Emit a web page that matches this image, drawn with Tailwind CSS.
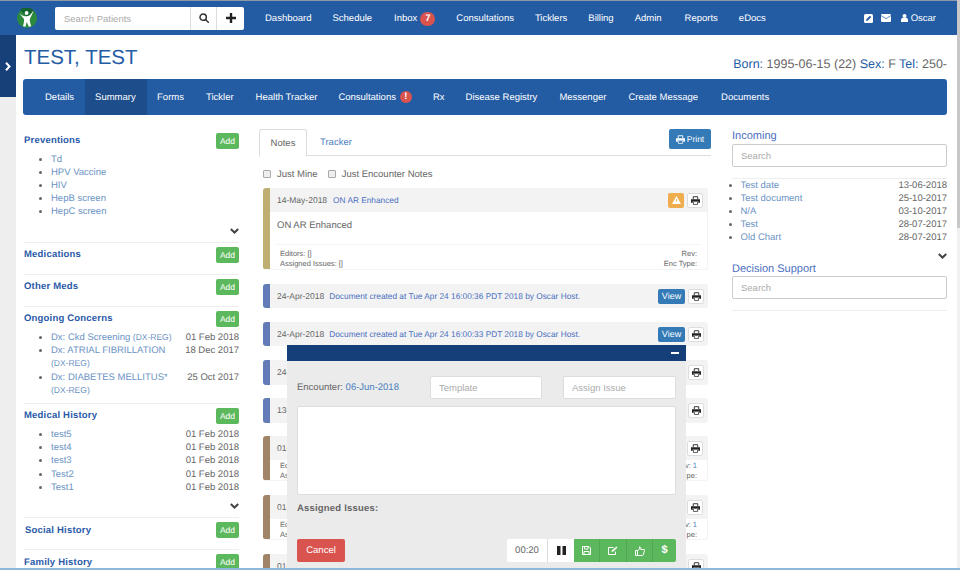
<!DOCTYPE html>
<html lang="en">
<head>
    <meta charset="UTF-8">
    <title>TEST, TEST - Summary</title>
    <script src="https://cdn.jsdelivr.net/npm/@tailwindcss/browser@4"></script>
</head>
<body class="font-['Liberation_Sans',sans-serif] [text-rendering:geometricPrecision] text-[9.5px] leading-[13px] text-[#666] bg-white">
<div class="relative w-[960px] h-[570px] overflow-hidden">

    <!-- Top nav -->
    <header class="h-[35px] w-[957px] bg-[#245ca4] border-t border-t-[#8d98a8] flex items-center text-white">
        <svg class="ml-[17px] w-[20px] h-[20px]" viewBox="0 0 20 20">
            <circle cx="10" cy="10" r="10" fill="#2c8a3e"/>
            <path d="M3 1.800A10 10 0 0 1 17 2.800L10 9z" fill="#14632f"/>
            <circle cx="9.600" cy="5" r="1.900" fill="#fff"/>
            <path d="M2.800 5.500C5 8 7 8.300 9.500 8.300C12 8.300 14 6.500 16.500 2.200C15.500 6.500 13.200 9.500 12.800 11.500C12.600 13.500 13.500 15.500 14.200 18.300L11.800 18.800L9.800 14L8.400 18.800L6 18.300C6.600 15.500 7.300 13.500 7 11.300C6.500 9.800 4 8 2.800 5.500Z" fill="#fff"/>
        </svg>
        <input class="ml-[18px] w-[135px] h-[23px] bg-white rounded-l-[2px] px-[9px] text-[9.5px] text-[#666] placeholder:text-[#aaa] outline-none" placeholder="Search Patients">
        <div class="flex h-[23px] bg-white rounded-r-[2px] border-l border-l-[#ddd]">
            <div class="w-[26px] flex items-center justify-center border-r border-r-[#ddd]">
                <svg class="w-[10px] h-[10px]" viewBox="0 0 12 12" fill="none" stroke="#333" stroke-width="1.800"><circle cx="5" cy="5" r="3.800"/><path d="M8 8l3.200 3.200" stroke-linecap="round"/></svg>
            </div>
            <div class="w-[27px] flex items-center justify-center">
                <svg class="w-[10px] h-[10px]" viewBox="0 0 10 10" fill="#222"><path d="M3.800 0h2.400v3.800H10v2.400H6.200V10H3.800V6.200H0V3.800h3.800z"/></svg>
            </div>
        </div>
        <nav class="ml-[21px] pt-[1px] flex gap-[21px] items-center">
            <span>Dashboard</span>
            <span>Schedule</span>
            <span class="ml-[1px] flex items-center gap-[3px]">Inbox <span class="w-[15px] h-[14px] rounded-full bg-[#d9534f] text-center leading-[14px] font-bold">7</span></span>
            <span>Consultations</span>
            <span>Ticklers</span>
            <span>Billing</span>
            <span>Admin</span>
            <span class="ml-[2px]">Reports</span>
            <span>eDocs</span>
        </nav>
        <div class="ml-auto mr-[21px] flex items-center">
            <svg class="w-[9px] h-[9px]" viewBox="0 0 9 9"><rect width="9" height="9" rx="1.500" fill="#fff"/><path d="M2 7l.5-2L6 1.700 7.300 3 3.900 6.500z" fill="#245ca4"/></svg>
            <svg class="ml-[8px] w-[10px] h-[8px]" viewBox="0 0 10 8"><rect width="10" height="8" rx="1" fill="#fff"/><path d="M0 1.500l5 3.200 5-3.200" fill="none" stroke="#245ca4" stroke-width=".7"/></svg>
            <svg class="ml-[10px] w-[7px] h-[8px]" viewBox="0 0 7 8" fill="#fff"><circle cx="3.500" cy="2" r="2"/><path d="M0 8V6c0-1.500 1-2 2-2.300h3C6 4 7 4.500 7 6v2z"/></svg>
            <span class="ml-[3px]">Oscar</span>
        </div>
    </header>

    <div class="flex h-[535px]">
        <!-- Collapsed side strip -->
        <aside class="w-[16px] h-full bg-[#eeeeee]">
            <div class="h-[62px] bg-[#173f78] flex items-center justify-center">
                <svg class="w-[6px] h-[9px]" viewBox="0 0 6 9" fill="none" stroke="#fff" stroke-width="2"><path d="M1 .8l3.500 3.700L1 8.200"/></svg>
            </div>
        </aside>

        <div class="w-[931px] pl-[7px]">
            <!-- Patient heading -->
            <div class="h-[44px] w-[924px] flex items-end justify-between pb-[9px]">
                <h1 class="ml-[1px] text-[20.500px] leading-[24px] text-[#245ca4]">TEST, TEST</h1>
                <p class="text-[12.500px] leading-[14px] -mb-[1px]"><span class="text-[#245ca4]">Born:</span> 1995-06-15 (22) <span class="text-[#245ca4]">Sex:</span> F <span class="text-[#245ca4]">Tel:</span> 250-</p>
            </div>

            <!-- Chart tabs -->
            <div class="h-[36px] w-[924px] bg-[#245ca4] rounded-[3px] flex items-center pl-[11px] text-white">
                <span class="px-[11px] h-full flex items-center">Details</span>
                <span class="pl-[10px] pr-[10px] w-[62px] h-full flex items-center bg-[#1e4d8c]">Summary</span>
                <span class="pl-[10px] pr-[11px] h-full flex items-center">Forms</span>
                <span class="pl-[11px] pr-[12px] h-full flex items-center">Tickler</span>
                <span class="pl-[10px] pr-[11px] h-full flex items-center">Health Tracker</span>
                <span class="px-[10px] h-full flex items-center gap-[4px]">Consultations <span class="w-[12px] h-[12px] rounded-full bg-[#d9534f] text-center leading-[12px] font-bold">!</span></span>
                <span class="px-[11px] h-full flex items-center">Rx</span>
                <span class="pl-[10px] pr-[11px] h-full flex items-center">Disease Registry</span>
                <span class="pl-[11px] pr-[12px] h-full flex items-center">Messenger</span>
                <span class="pl-[10px] pr-[12px] h-full flex items-center">Create Message</span>
                <span class="px-[11px] h-full flex items-center">Documents</span>
            </div>

            <div class="flex mt-[14px]">
                <!-- Left column -->
                <section class="w-[215px] ml-[1px] mt-[4px] shrink-0">
                    <div class="h-[110px] border-b border-b-[#eee]">
                        <div class="flex justify-between items-center h-[16px]">
                            <h3 class="font-bold text-[#2a5aa8] tracking-[0.2px] -mt-[1px]">Preventions</h3>
                            <span class="w-[23px] h-[16px] bg-[#5cb85c] rounded-[2px] text-white text-center leading-[16px] text-[8.5px]">Add</span>
                        </div>
                        <ul class="mt-[3.5px] pl-[27px] leading-[13.2px] list-disc text-[#6b93c4] marker:text-[#666]">
                            <li>Td</li><li>HPV Vaccine</li><li>HIV</li><li>HepB screen</li><li>HepC screen</li>
                        </ul>
                        <div class="flex justify-end mt-[9px]">
                            <svg class="w-[9px] h-[6px]" viewBox="0 0 9 6" fill="none" stroke="#444" stroke-width="2"><path d="M.8 1l3.700 3.500L8.200 1"/></svg>
                        </div>
                    </div>
                    <div class="h-[32px] border-b border-b-[#eee] pt-[4px] flex justify-between items-start">
                        <h3 class="font-bold text-[#2a5aa8] tracking-[0.2px] leading-[16px]">Medications</h3>
                        <span class="w-[23px] h-[16px] bg-[#5cb85c] rounded-[2px] text-white text-center leading-[16px] text-[8.5px]">Add</span>
                    </div>
                    <div class="h-[32px] border-b border-b-[#eee] pt-[4px] flex justify-between items-start">
                        <h3 class="font-bold text-[#2a5aa8] tracking-[0.2px] leading-[16px]">Other Meds</h3>
                        <span class="w-[23px] h-[16px] bg-[#5cb85c] rounded-[2px] text-white text-center leading-[16px] text-[8.5px]">Add</span>
                    </div>
                    <div class="h-[97px] border-b border-b-[#eee] pt-[4px]">
                        <div class="flex justify-between items-center h-[16px]">
                            <h3 class="font-bold text-[#2a5aa8] tracking-[0.2px] -mt-[1px]">Ongoing Concerns</h3>
                            <span class="w-[23px] h-[16px] bg-[#5cb85c] rounded-[2px] text-white text-center leading-[16px] text-[8.5px]">Add</span>
                        </div>
                        <ul class="mt-[4px] pl-[27px] leading-[13.2px] list-disc marker:text-[#666]">
                            <li><div class="flex justify-between"><span class="text-[#6b93c4]">Dx: Ckd Screening <span class="text-[8.5px]">(DX-REG)</span></span><span>01 Feb 2018</span></div></li>
                            <li><div class="flex justify-between"><span class="text-[#6b93c4]">Dx: ATRIAL FIBRILLATION</span><span>18 Dec 2017</span></div><div class="text-[8.5px] text-[#6b93c4]">(DX-REG)</div></li>
                            <li><div class="flex justify-between"><span class="text-[#6b93c4]">Dx: DIABETES MELLITUS*</span><span>25 Oct 2017</span></div><div class="text-[8.5px] text-[#6b93c4]">(DX-REG)</div></li>
                        </ul>
                    </div>
                    <div class="h-[114px] border-b border-b-[#eee] pt-[4px]">
                        <div class="flex justify-between items-center h-[16px]">
                            <h3 class="font-bold text-[#2a5aa8] tracking-[0.2px] -mt-[1px]">Medical History</h3>
                            <span class="w-[23px] h-[16px] bg-[#5cb85c] rounded-[2px] text-white text-center leading-[16px] text-[8.5px]">Add</span>
                        </div>
                        <ul class="mt-[4px] pl-[27px] leading-[13.2px] list-disc marker:text-[#666]">
                            <li><div class="flex justify-between"><span class="text-[#6b93c4]">test5</span><span>01 Feb 2018</span></div></li>
                            <li><div class="flex justify-between"><span class="text-[#6b93c4]">test4</span><span>01 Feb 2018</span></div></li>
                            <li><div class="flex justify-between"><span class="text-[#6b93c4]">test3</span><span>01 Feb 2018</span></div></li>
                            <li><div class="flex justify-between"><span class="text-[#6b93c4]">Test2</span><span>01 Feb 2018</span></div></li>
                            <li><div class="flex justify-between"><span class="text-[#6b93c4]">Test1</span><span>01 Feb 2018</span></div></li>
                        </ul>
                        <div class="flex justify-end mt-[9px]">
                            <svg class="w-[9px] h-[6px]" viewBox="0 0 9 6" fill="none" stroke="#444" stroke-width="2"><path d="M.8 1l3.700 3.500L8.200 1"/></svg>
                        </div>
                    </div>
                    <div class="h-[32px] border-b border-b-[#eee] pt-[4px] flex justify-between items-start">
                        <h3 class="font-bold text-[#2a5aa8] tracking-[0.2px] leading-[16px] ml-[1px] mt-[1px]">Social History</h3>
                        <span class="w-[23px] h-[16px] bg-[#5cb85c] rounded-[2px] text-white text-center leading-[16px] text-[8.5px]">Add</span>
                    </div>
                    <div class="pt-[4px] flex justify-between items-start">
                        <h3 class="font-bold text-[#2a5aa8] tracking-[0.2px] leading-[16px] mt-[1px]">Family History</h3>
                        <span class="w-[23px] h-[16px] bg-[#5cb85c] rounded-[2px] text-white text-center leading-[16px] text-[8.5px]">Add</span>
                    </div>
                </section>

                <!-- Notes column -->
                <section class="w-[452px] ml-[20px] shrink-0">
                    <div class="h-[27px] border-b border-b-[#ddd] flex items-start justify-between">
                        <div class="flex">
                            <span class="h-[28px] w-[48px] bg-white border border-[#ddd] border-b-white rounded-t-[3px] text-center leading-[28px]">Notes</span>
                            <span class="h-[27px] ml-[13px] leading-[28px] text-[#4a80bd]">Tracker</span>
                        </div>
                        <span class="w-[42px] h-[20px] bg-[#337ab7] rounded-[2px] text-white text-[8.500px] flex items-center justify-center gap-[2px]">
                            <svg class="w-[9px] h-[9px]" viewBox="0 0 10 10"><path d="M2.500 3.500V.8h5v2.700" fill="none" stroke="#fff" stroke-width="1"/><path d="M0 3.500h10v4H8V5.500H2v2H0z" fill="#fff"/><path d="M2.700 6.200h4.600v3.200H2.700z" fill="none" stroke="#fff" stroke-width=".8"/></svg>
                            Print
                        </span>
                    </div>
                    <div class="h-[32px] pt-[4px] pl-[4px] flex items-center gap-[10px]">
                        <label class="flex items-center gap-[6px]"><span class="w-[8px] h-[8px] bg-[#eee] border border-[#aaa] rounded-[1px]"></span>Just Mine</label>
                        <label class="flex items-center gap-[6px]"><span class="w-[8px] h-[8px] bg-[#eee] border border-[#aaa] rounded-[1px]"></span>Just Encounter Notes</label>
                    </div>

                    <div class="ml-[4px] w-[445px] flex flex-col">
                        <div class="h-[82px] flex rounded-[3px] overflow-hidden border-r border-b border-[#f3f3f3]">
                            <div class="w-[7px] bg-[#bfae72]"></div>
                            <div class="flex-1">
                                <div class="h-[24px] bg-[#f3f3f3] flex items-center pl-[7px] pr-[4px] text-[8.500px]">
                                    <span>14-May-2018</span><span class="ml-[6px] text-[8.300px] text-[#4a6fc0]">ON AR Enhanced</span>
                                    <span class="ml-auto w-[16px] h-[15px] bg-[#f0ad4e] rounded-[2px] flex items-center justify-center">
                                        <svg class="w-[9px] h-[8px]" viewBox="0 0 9 8"><path d="M4.500 0L9 8H0z" fill="#fff"/><path d="M4.500 3v2.500" stroke="#f0ad4e" stroke-width="1"/></svg>
                                    </span>
                                    <span class="ml-[3px] w-[16px] h-[15px] bg-white border border-[#ddd] rounded-[2px] flex items-center justify-center">
                                        <svg class="w-[9px] h-[9px]" viewBox="0 0 10 10"><path d="M2.500 3.500V.8h5v2.700" fill="none" stroke="#222" stroke-width="1"/><path d="M0 3.500h10v4H8V5.500H2v2H0z" fill="#222"/><path d="M2.700 6.200h4.600v3.200H2.700z" fill="none" stroke="#222" stroke-width=".8"/></svg>
                                    </span>
                                </div>
                                <div class="mx-[7px] h-[33px] pt-[7px] border-b border-b-[#f3f3f3] text-[9.500px]">ON AR Enhanced</div>
                                <div class="px-[10px] pt-[4px] flex justify-between text-[7.500px] leading-[10px]">
                                    <div>Editors: []<br>Assigned Issues: []</div>
                                    <div class="text-left"><div class="text-right">Rev:</div>Enc Type:</div>
                                </div>
                            </div>
                        </div>

                        <div class="mt-[14px] h-[24px] flex rounded-[3px] overflow-hidden bg-[#f3f3f3]">
                            <div class="w-[7px] bg-[#637cb8]"></div>
                            <div class="flex-1 flex items-center pl-[7px] pr-[4px] text-[8.500px]">
                                <span>24-Apr-2018</span><span class="ml-[5px] text-[8.300px] text-[#4a6fc0]">Document created at Tue Apr 24 16:00:36 PDT 2018 by Oscar Host.</span>
                                <span class="ml-auto w-[27px] h-[15px] bg-[#337ab7] rounded-[2px] text-white text-center leading-[15px] text-[9px]">View</span>
                                <span class="ml-[3px] w-[16px] h-[15px] bg-white border border-[#ddd] rounded-[2px] flex items-center justify-center">
                                    <svg class="w-[9px] h-[9px]" viewBox="0 0 10 10"><path d="M2.500 3.500V.8h5v2.700" fill="none" stroke="#222" stroke-width="1"/><path d="M0 3.500h10v4H8V5.500H2v2H0z" fill="#222"/><path d="M2.700 6.200h4.600v3.200H2.700z" fill="none" stroke="#222" stroke-width=".8"/></svg>
                                </span>
                            </div>
                        </div>
                        <div class="mt-[14px] h-[24px] flex rounded-[3px] overflow-hidden bg-[#f3f3f3]">
                            <div class="w-[7px] bg-[#637cb8]"></div>
                            <div class="flex-1 flex items-center pl-[7px] pr-[4px] text-[8.500px]">
                                <span>24-Apr-2018</span><span class="ml-[5px] text-[8.300px] text-[#4a6fc0]">Document created at Tue Apr 24 16:00:33 PDT 2018 by Oscar Host.</span>
                                <span class="ml-auto w-[27px] h-[15px] bg-[#337ab7] rounded-[2px] text-white text-center leading-[15px] text-[9px]">View</span>
                                <span class="ml-[3px] w-[16px] h-[15px] bg-white border border-[#ddd] rounded-[2px] flex items-center justify-center">
                                    <svg class="w-[9px] h-[9px]" viewBox="0 0 10 10"><path d="M2.500 3.500V.8h5v2.700" fill="none" stroke="#222" stroke-width="1"/><path d="M0 3.500h10v4H8V5.500H2v2H0z" fill="#222"/><path d="M2.700 6.200h4.600v3.200H2.700z" fill="none" stroke="#222" stroke-width=".8"/></svg>
                                </span>
                            </div>
                        </div>
                        <div class="mt-[14px] h-[25px] flex rounded-[3px] overflow-hidden bg-[#f3f3f3]">
                            <div class="w-[7px] bg-[#637cb8]"></div>
                            <div class="flex-1 flex items-center pl-[7px] pr-[4px] text-[8.500px]">
                                <span>24-</span>
                                <span class="ml-auto w-[16px] h-[15px] bg-white border border-[#ddd] rounded-[2px] flex items-center justify-center">
                                    <svg class="w-[9px] h-[9px]" viewBox="0 0 10 10"><path d="M2.500 3.500V.8h5v2.700" fill="none" stroke="#222" stroke-width="1"/><path d="M0 3.500h10v4H8V5.500H2v2H0z" fill="#222"/><path d="M2.700 6.200h4.600v3.200H2.700z" fill="none" stroke="#222" stroke-width=".8"/></svg>
                                </span>
                            </div>
                        </div>
                        <div class="mt-[13px] h-[25px] flex rounded-[3px] overflow-hidden bg-[#f3f3f3]">
                            <div class="w-[7px] bg-[#637cb8]"></div>
                            <div class="flex-1 flex items-center pl-[7px] pr-[4px] text-[8.500px]">
                                <span>13-</span>
                                <span class="ml-auto w-[16px] h-[15px] bg-white border border-[#ddd] rounded-[2px] flex items-center justify-center">
                                    <svg class="w-[9px] h-[9px]" viewBox="0 0 10 10"><path d="M2.500 3.500V.8h5v2.700" fill="none" stroke="#222" stroke-width="1"/><path d="M0 3.500h10v4H8V5.500H2v2H0z" fill="#222"/><path d="M2.700 6.200h4.600v3.200H2.700z" fill="none" stroke="#222" stroke-width=".8"/></svg>
                                </span>
                            </div>
                        </div>
                        <div class="mt-[13px] h-[45px] flex rounded-[3px] overflow-hidden border-r border-b border-[#f3f3f3]">
                            <div class="w-[7px] bg-[#a08468]"></div>
                            <div class="flex-1">
                                <div class="h-[24px] bg-[#f3f3f3] flex items-center pl-[7px] pr-[4px] text-[8.500px]">
                                    <span>01-</span>
                                    <span class="ml-auto w-[16px] h-[15px] bg-white border border-[#ddd] rounded-[2px] flex items-center justify-center">
                                        <svg class="w-[9px] h-[9px]" viewBox="0 0 10 10"><path d="M2.500 3.500V.8h5v2.700" fill="none" stroke="#222" stroke-width="1"/><path d="M0 3.500h10v4H8V5.500H2v2H0z" fill="#222"/><path d="M2.700 6.200h4.600v3.200H2.700z" fill="none" stroke="#222" stroke-width=".8"/></svg>
                                    </span>
                                </div>
                                <div class="px-[10px] pt-[1px] flex justify-between text-[7.500px] leading-[10px]">
                                    <div>Ed<br>As</div>
                                    <div class="text-right">v: <span class="text-[#4a80bd]">1</span><br>pe:</div>
                                </div>
                            </div>
                        </div>
                        <div class="mt-[14px] h-[45px] flex rounded-[3px] overflow-hidden border-r border-b border-[#f3f3f3]">
                            <div class="w-[7px] bg-[#a08468]"></div>
                            <div class="flex-1">
                                <div class="h-[24px] bg-[#f3f3f3] flex items-center pl-[7px] pr-[4px] text-[8.500px]">
                                    <span>01-</span>
                                    <span class="ml-auto w-[16px] h-[15px] bg-white border border-[#ddd] rounded-[2px] flex items-center justify-center">
                                        <svg class="w-[9px] h-[9px]" viewBox="0 0 10 10"><path d="M2.500 3.500V.8h5v2.700" fill="none" stroke="#222" stroke-width="1"/><path d="M0 3.500h10v4H8V5.500H2v2H0z" fill="#222"/><path d="M2.700 6.200h4.600v3.200H2.700z" fill="none" stroke="#222" stroke-width=".8"/></svg>
                                    </span>
                                </div>
                                <div class="px-[10px] pt-[1px] flex justify-between text-[7.500px] leading-[10px]">
                                    <div>Ed<br>As</div>
                                    <div class="text-right">v: <span class="text-[#4a80bd]">1</span><br>pe:</div>
                                </div>
                            </div>
                        </div>
                        <div class="mt-[14px] h-[45px] flex rounded-[3px] overflow-hidden">
                            <div class="w-[7px] bg-[#a08468]"></div>
                            <div class="flex-1">
                                <div class="h-[24px] bg-[#f3f3f3] flex items-center pl-[7px] pr-[4px] text-[8.500px]">
                                    <span>01-</span>
                                    <span class="ml-auto w-[16px] h-[15px] bg-white border border-[#ddd] rounded-[2px] flex items-center justify-center">
                                        <svg class="w-[9px] h-[9px]" viewBox="0 0 10 10"><path d="M2.500 3.500V.8h5v2.700" fill="none" stroke="#222" stroke-width="1"/><path d="M0 3.500h10v4H8V5.500H2v2H0z" fill="#222"/><path d="M2.700 6.200h4.600v3.200H2.700z" fill="none" stroke="#222" stroke-width=".8"/></svg>
                                    </span>
                                </div>
                            </div>
                        </div>
                    </div>
                </section>

                <!-- Right column -->
                <section class="w-[215px] ml-[21px] shrink-0">
                    <h4 class="text-[11px] leading-[14px] text-[#4a6fc0]">Incoming</h4>
                    <input class="mt-[1px] block w-[215px] h-[23px] border border-[#ccc] rounded-[2px] px-[8px] text-[9.500px] placeholder:text-[#aaa] outline-none" placeholder="Search">
                    <div class="mt-[11px] border-t border-t-[#eee]">
                        <ul class="pl-[8.500px] list-disc marker:text-[#666]">
                            <li><div class="flex justify-between"><span class="text-[#6b93c4]">Test date</span><span>13-06-2018</span></div></li>
                            <li><div class="flex justify-between"><span class="text-[#6b93c4]">Test document</span><span>25-10-2017</span></div></li>
                            <li><div class="flex justify-between"><span class="text-[#6b93c4]">N/A</span><span>03-10-2017</span></div></li>
                            <li><div class="flex justify-between"><span class="text-[#6b93c4]">Test</span><span>28-07-2017</span></div></li>
                            <li><div class="flex justify-between"><span class="text-[#6b93c4]">Old Chart</span><span>28-07-2017</span></div></li>
                        </ul>
                    </div>
                    <div class="flex justify-end mt-[9px]">
                        <svg class="w-[9px] h-[6px]" viewBox="0 0 9 6" fill="none" stroke="#444" stroke-width="2"><path d="M.8 1l3.700 3.500L8.200 1"/></svg>
                    </div>
                    <h4 class="text-[11px] leading-[14px] text-[#4a6fc0] mt-[3px]">Decision Support</h4>
                    <input class="block w-[215px] h-[23px] border border-[#ccc] rounded-[2px] px-[8px] text-[9.500px] placeholder:text-[#aaa] outline-none" placeholder="Search">
                    <div class="mt-[11px] border-t border-t-[#eee]"></div>
                </section>
            </div>
        </div>
    </div>

    <!-- Encounter note editor, floats over the notes list -->
    <div class="absolute left-[287px] top-[345px] w-[399px] h-[225px] bg-[#ebebeb]">
        <div class="h-[16px] bg-[#143f78] flex items-center justify-end pr-[7px]">
            <span class="w-[8px] h-[2px] bg-white"></span>
        </div>
        <div class="px-[10px]">
            <div class="mt-[15px] h-[23px] flex items-center">
                <span class="w-[133px]">Encounter: <span class="text-[#4a80bd]">06-Jun-2018</span></span>
                <input class="w-[112px] h-[23px] bg-white border border-[#ddd] rounded-[2px] px-[8px] text-[9.500px] placeholder:text-[#aaa] outline-none" placeholder="Template">
                <input class="ml-[21px] w-[113px] h-[23px] bg-white border border-[#ddd] rounded-[2px] px-[8px] text-[9.500px] placeholder:text-[#aaa] outline-none" placeholder="Assign Issue">
            </div>
            <textarea class="mt-[7px] block w-[379px] h-[89px] bg-white border border-[#ddd] rounded-[2px] outline-none resize-none"></textarea>
            <div class="mt-[7px] font-bold tracking-[0.2px]">Assigned Issues:</div>
            <div class="mt-[24px] flex justify-between items-center">
                <span class="w-[48px] h-[23px] bg-[#d9534f] rounded-[2px] text-white text-center leading-[23px]">Cancel</span>
                <div class="flex h-[23px] rounded-[2px] overflow-hidden">
                    <span class="w-[41px] bg-white border-r border-r-[#ddd] text-center leading-[23px]">00:20</span>
                    <span class="w-[26px] bg-white flex items-center justify-center">
                        <svg class="w-[9px] h-[9px]" viewBox="0 0 9 9" fill="#222"><path d="M0 0h3.500v9H0zM5.500 0H9v9H5.500z"/></svg>
                    </span>
                    <span class="w-[26px] bg-[#5cb85c] border-r border-r-[#52a852] flex items-center justify-center">
                        <svg class="w-[9px] h-[9px]" viewBox="0 0 9 9" fill="none" stroke="#fff" stroke-width="1"><path d="M.5.500h6.500l1.500 1.500v6.500h-8z"/><path d="M2.500.500v2.500h3.500V.500M2 8.500V5.500h5v3"/></svg>
                    </span>
                    <span class="w-[27px] bg-[#5cb85c] border-r border-r-[#52a852] flex items-center justify-center">
                        <svg class="w-[10px] h-[9px]" viewBox="0 0 10 9" fill="none" stroke="#fff" stroke-width="1"><path d="M7.500 5.500v3h-7v-7h5"/><path d="M3.500 6l.5-1.800L8.500.5l1 1L5.300 5.500z" fill="#fff" stroke="none"/></svg>
                    </span>
                    <span class="w-[26px] bg-[#5cb85c] border-r border-r-[#52a852] flex items-center justify-center">
                        <svg class="w-[10px] h-[10px]" viewBox="0 0 10 10" fill="none" stroke="#fff" stroke-width="1"><path d="M.5 4.500h2v5h-2zM2.500 5L4.500 2.800V.8c1.200 0 1.500 1 1.200 2.700H9.200c.5 0 .5 1 .1 1.500L8.200 9c-.2.400-.5.500-1 .5H2.500"/></svg>
                    </span>
                    <span class="w-[23px] bg-[#5cb85c] text-white font-bold text-[11px] text-center leading-[23px]">$</span>
                </div>
            </div>
        </div>
    </div>

    <!-- Window scrollbar and bottom edge -->
    <div class="absolute right-0 top-0 w-[3px] h-[570px] bg-[#f1f1f1]">
        <div class="h-[228px] bg-[#c8c8c8]"></div>
    </div>
    <div class="absolute left-0 bottom-0 w-full h-[2px] bg-[#8fb7d9]"></div>
</div>
</body>
</html>
